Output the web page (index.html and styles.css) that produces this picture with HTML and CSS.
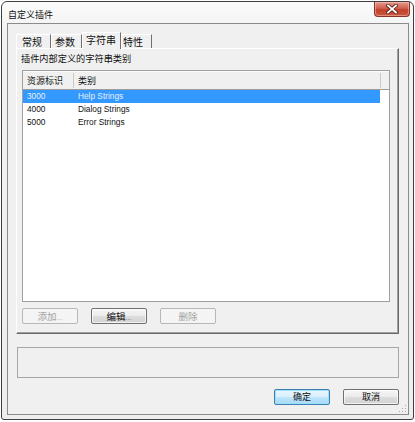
FILE: index.html
```html
<!DOCTYPE html>
<html>
<head>
<meta charset="utf-8">
<link rel="stylesheet" href="styles.css">
</head>
<body>
<div class="window">
  <div class="titlebar">
    <span class="title">自定义插件</span>
    <div class="close">
      <svg width="12" height="10" viewBox="0 0 12 10">
        <path d="M2 1.5 L10 8.5 M10 1.5 L2 8.5" stroke="#5a2018" stroke-width="3.6" stroke-linecap="square" fill="none"/>
        <path d="M2 1.5 L10 8.5 M10 1.5 L2 8.5" stroke="#ffffff" stroke-width="1.8" stroke-linecap="square" fill="none"/>
      </svg>
    </div>
  </div>
  <div class="client">
    <div class="tabs">
      <div class="tab t1">常规</div>
      <div class="tab t2">参数</div>
      <div class="tab t3 active">字符串</div>
      <div class="tab t4">特性</div>
    </div>
    <div class="panel">
      <div class="caption">插件内部定义的字符串类别</div>
      <div class="list">
        <div class="lhead">
          <div class="hc c1">资源标识</div>
          <div class="hc c2">类别</div>
        </div>
        <div class="row sel"><div class="c1">3000</div><div class="c2">Help Strings</div></div>
        <div class="row"><div class="c1">4000</div><div class="c2">Dialog Strings</div></div>
        <div class="row"><div class="c1">5000</div><div class="c2">Error Strings</div></div>
      </div>
      <div class="btnrow">
        <div class="btn disabled">添加<span class="dots">...</span></div>
        <div class="btn">编辑<span class="dots">...</span></div>
        <div class="btn disabled">删除</div>
      </div>
    </div>
    <div class="status"></div>
    <div class="footer">
      <div class="btn default">确定</div>
      <div class="btn">取消</div>
    </div>
    <div class="grip">
      <svg width="8" height="8" viewBox="0 0 8 8">
        <rect x="6" y="0" width="1" height="1" fill="#a8a8a8"/>
        <rect x="3" y="3" width="1" height="1" fill="#a8a8a8"/>
        <rect x="6" y="3" width="1" height="1" fill="#a8a8a8"/>
        <rect x="0" y="6" width="1" height="1" fill="#a8a8a8"/>
        <rect x="3" y="6" width="1" height="1" fill="#a8a8a8"/>
        <rect x="6" y="6" width="1" height="1" fill="#a8a8a8"/>
      </svg>
    </div>
  </div>
</div>
</body>
</html>
```

FILE: styles.css
```css
html, body {
  margin: 0;
  padding: 0;
  background: #ffffff;
}
body {
  width: 415px;
  height: 422px;
  overflow: hidden;
  font-family: "Noto Sans CJK SC", "Liberation Sans", sans-serif;
  color: #000;
}
.window {
  box-sizing: border-box;
  width: 413px;
  height: 419px;
  margin: 1px 0 0 1px;
  border: 1px solid #3f3f3f;
  border-radius: 6px 6px 3px 3px;
  background: linear-gradient(#fbfbfb, #f1f2f3 30px, #eeeeee);
  padding: 0 4px 4px 5px;
  display: flex;
  flex-direction: column;
}
.titlebar {
  height: 21px;
  display: flex;
  align-items: flex-start;
}
.title {
  font-size: 9px;
  line-height: 9px;
  margin: 8px 0 0 1px;
  color: #111;
}
.close {
  margin-left: auto;
  margin-right: -1px;
  width: 36px;
  height: 15px;
  box-sizing: border-box;
  border: 1px solid #8a3327;
  border-top: none;
  border-radius: 0 0 4px 4px;
  background: linear-gradient(#e39a8c, #d0604f 45%, #c2402c 55%, #c85a3f);
  box-shadow: inset 0 0 0 1px rgba(255,210,200,0.45);
  display: flex;
  align-items: center;
  justify-content: center;
}
.close svg { display: block; }
.client {
  flex: 1;
  position: relative;
  border: 1px solid #8b8b8b;
  background: #f0f0f0;
  display: flex;
  flex-direction: column;
}
.tabs {
  display: flex;
  align-items: flex-end;
  height: 16px;
  margin: 8px 0 0 8px;
}
.tab {
  box-sizing: border-box;
  height: 14px;
  font-size: 10px;
  line-height: 13px;
  border-top: 1px solid #ffffff;
  border-left: 1px solid #ffffff;
  border-right: 1px solid #6f6f6f;
  color: #111;
  white-space: nowrap;
}
.t1 { width: 35px; padding-left: 5px; }
.t2 { width: 31px; padding-left: 3px; }
.t3 { width: 39px; padding-left: 3px; }
.t4 { width: 31px; padding-left: 1px; }
.tab.active {
  height: 17px;
  margin-bottom: -1px;
  background: #f0f0f0;
  z-index: 2;
  line-height: 12px;
  padding-top: 1px;
}
.panel {
  box-sizing: border-box;
  width: 383px;
  height: 286px;
  margin-left: 8px;
  border-top: 1px solid #ffffff;
  border-left: 1px solid #ffffff;
  border-right: 1px solid #6a6a6a;
  border-bottom: 1px solid #6a6a6a;
  box-shadow: inset -1px -1px 0 #a0a0a0;
  display: flex;
  flex-direction: column;
}
.caption {
  font-size: 9.2px;
  line-height: 13px;
  height: 13px;
  margin: 3px 0 0 4px;
  color: #111;
}
.list {
  box-sizing: border-box;
  width: 368px;
  height: 232px;
  margin: 5px 0 0 5px;
  border: 1px solid #a0a0a0;
  background: #ffffff;
}
.lhead {
  display: flex;
  width: 358px;
  height: 19px;
  box-sizing: border-box;
  background: #f0f0f0;
  border-bottom: 1px solid #9c9c9c;
  border-top: 1px solid #fafafa;
  width: 366px;
}
.hc {
  box-sizing: border-box;
  font-size: 9px;
  line-height: 17px;
  padding-left: 4px;
  color: #111;
}
.lhead .c1 {
  width: 51px;
  border-right: 1px solid #c8c8c8;
  margin: 1px 0 1px 0;
  line-height: 15px;
}
.lhead .c2 {
  width: 307px;
  border-right: 1px solid #c8c8c8;
  margin: 1px 0 1px 0;
  line-height: 15px;
}
.row {
  display: flex;
  width: 357px;
  height: 13px;
  font-family: "Liberation Sans", "Noto Sans CJK SC", sans-serif;
  font-size: 8.3px;
  line-height: 13px;
  color: #111;
}
.row .c1 { width: 51px; padding-left: 4px; box-sizing: border-box; }
.row .c2 { padding-left: 4px; }
.row.sel {
  background: #3399ff;
  color: #e6eef8;
}
.btnrow {
  display: flex;
  gap: 13px;
  margin: 6px 0 0 5px;
}
.btn {
  box-sizing: border-box;
  width: 56px;
  height: 16px;
  border: 1px solid #707070;
  border-radius: 2px;
  background: linear-gradient(#f6f6f6, #ebebeb 50%, #dddddd 51%, #d2d2d2);
  box-shadow: inset 0 0 0 1px rgba(255,255,255,0.7);
  font-size: 9.5px;
  line-height: 14px;
  text-align: center;
  color: #111;
}
.btn .dots {
  font-family: "Liberation Sans", sans-serif;
  font-size: 7px;
  color: #7a5a9a;
}
.btn.disabled {
  border-color: #b8b8b8;
  background: #f4f4f4;
  box-shadow: none;
  color: #a3a3a3;
}
.btn.disabled .dots { color: #b0b0b0; }
.btn.default {
  border-color: #3c7fb1;
  background: linear-gradient(#eaf6fd, #d9f0fc 50%, #bee6fd 51%, #a7d9f5);
  box-shadow: inset 0 0 0 1px #9ee0f8;
  font-size: 9px;
}
.status {
  box-sizing: border-box;
  width: 382px;
  height: 31px;
  margin: 13px 0 0 9px;
  border: 1px solid #a6a6a6;
  background: #f0f0f0;
}
.footer {
  display: flex;
  justify-content: flex-end;
  gap: 13px;
  margin-top: 11px;
  padding-right: 9px;
}
.footer .btn { font-size: 9px; }
.grip {
  position: absolute;
  right: 1px;
  bottom: 1px;
  width: 8px;
  height: 8px;
}
.grip svg { display: block; }
```
